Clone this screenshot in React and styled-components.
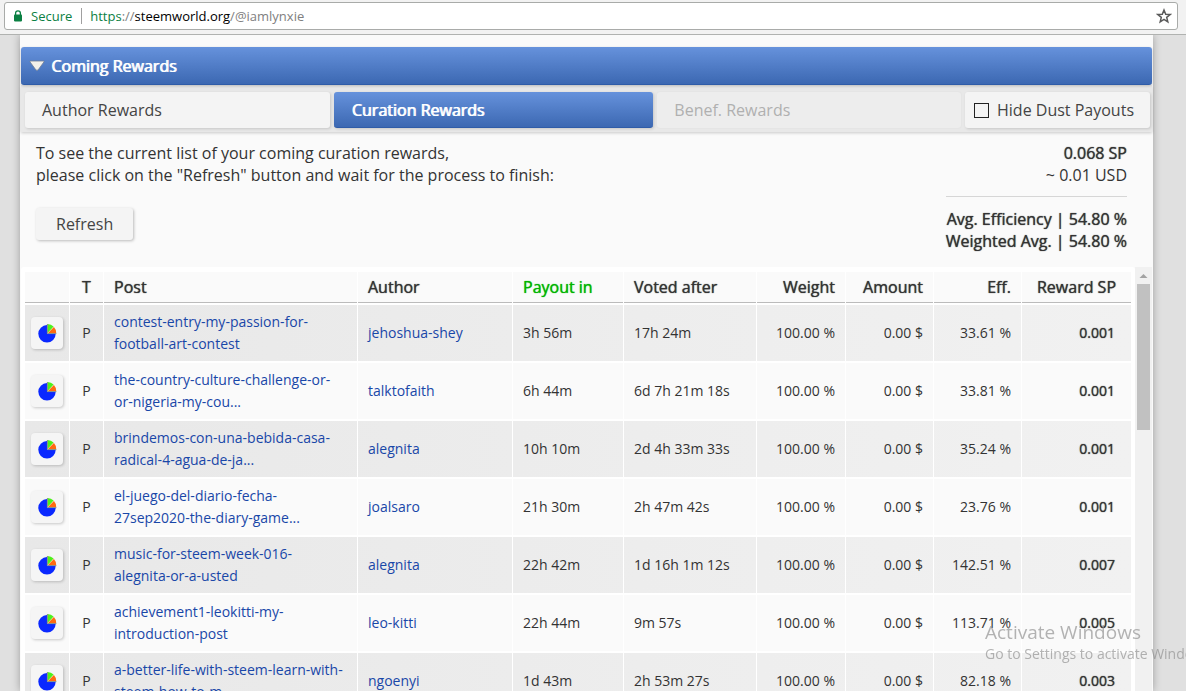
import { useState } from "react";
import styled, { createGlobalStyle, css } from "styled-components";

const GlobalStyle = createGlobalStyle`
  * {
    box-sizing: border-box;
  }
  body {
    margin: 0;
    background: #e0e0e0;
    color: #333;
    font-family: "Open Sans", "Noto Sans", sans-serif;
    font-size: 16px;
    line-height: 22px;
  }
`;

const strong = css`
  text-shadow: 0 0 1px currentColor;
`;

const blue = css`
  background: linear-gradient(#6692dc, #3c68b2);
  border-bottom: 1px solid #2f5ca8;
  color: #fff;
  text-shadow: 1px 0 0 currentColor;
`;

const Screen = styled.div`
  display: flex;
  flex-direction: column;
  height: 100vh;
  overflow: hidden;
`;

const BrowserBar = styled.div`
  flex: none;
  position: relative;
  padding: 2px 8px 4px 4px;
  background: #f2f2f2;
  border-bottom: 1px solid #b0b2b0;
`;

const AddressBox = styled.div`
  display: flex;
  align-items: center;
  height: 28px;
  padding: 0 5px 0 8px;
  background: #fff;
  border: 1px solid #a9aba9;
  border-radius: 3px;
  font-size: 13px;
`;

const Secure = styled.span`
  margin-left: 8px;
  padding-right: 9px;
  border-right: 1px solid #a0a0a0;
  color: #0b8043;
  line-height: 16px;
`;

const Url = styled.a`
  flex: 1;
  margin-left: 8px;
  color: #808080;
  text-decoration: none;
`;

const Scheme = styled.span`
  color: #0b8043;
`;

const Host = styled.span`
  color: #000;
`;

const IconButton = styled.button`
  display: flex;
  padding: 0;
  border: 0;
  background: none;
`;

const Page = styled.main`
  flex: 1;
  min-height: 0;
  display: flex;
  flex-direction: column;
  margin: 0 33px 0 20px;
  padding: 12px 1px 0;
  background: #fafafa;
  box-shadow: 0 0 8px rgba(0, 0, 0, 0.3);
`;

const SectionHeader = styled.button`
  ${blue}
  flex: none;
  position: relative;
  display: flex;
  align-items: center;
  gap: 6px;
  height: 38px;
  padding: 0 8px;
  border-width: 0 0 1px;
  border-radius: 3px;
  box-shadow: 0 1px 3px rgba(0, 0, 0, 0.2);
  font: inherit;
`;

const TabBar = styled.div`
  flex: none;
  display: flex;
  gap: 4px;
  padding: 7px 2px 4px 4px;
  background: #e8e8e8;
  box-shadow: 0 1px 3px rgba(0, 0, 0, 0.2);
`;

const Tab = styled.button`
  flex: ${(p) => p.$grow} 1 0;
  height: 36px;
  padding: 0 17px;
  border: 0;
  border-radius: 3px;
  background: #f4f4f4;
  box-shadow: 1px 1px 3px rgba(0, 0, 0, 0.15);
  color: #444;
  font: inherit;
  text-align: left;
  &:disabled {
    background: #ededed;
    box-shadow: 0 0 2px rgba(0, 0, 0, 0.06);
    color: #b0b0b0;
  }
  ${(p) => p.$active && blue}
`;

const DustLabel = styled.label`
  flex: none;
  display: flex;
  align-items: center;
  gap: 8px;
  height: 36px;
  padding: 0 16px 0 9px;
  border-radius: 3px;
  background: #f4f4f4;
  box-shadow: 1px 1px 3px rgba(0, 0, 0, 0.15);
  color: #444;
`;

const Checkbox = styled.input`
  appearance: none;
  width: 15px;
  height: 15px;
  margin: 0;
  border: 1px solid #222;
  &:checked {
    background: #3c68b2;
  }
`;

const Summary = styled.section`
  flex: none;
  display: flex;
  justify-content: space-between;
  align-items: flex-start;
  padding: 10px 25px 15px 15px;
`;

const Intro = styled.p`
  margin: 0 0 22px;
`;

const RefreshButton = styled.button`
  height: 32px;
  padding: 0 20px;
  border: 0;
  border-radius: 3px;
  background: #f4f4f4;
  box-shadow: 1px 1px 3px rgba(0, 0, 0, 0.25);
  color: #444;
  font: inherit;
`;

const Totals = styled.div`
  text-align: right;
`;

const Total = styled.div`
  ${(p) => p.$strong && strong}
`;

const Rule = styled.hr`
  margin: 10px 0 11px;
  border: 0;
  border-top: 1px solid #d6d6d6;
`;

const TableArea = styled.div`
  flex: 1;
  min-height: 0;
  display: flex;
  overflow: hidden;
`;

const TableScroll = styled.div`
  flex: 1;
  min-width: 0;
  padding: 3px 3px 0;
  background: #fff;
  border-radius: 3px 3px 0 0;
`;

const Table = styled.table`
  width: 100%;
  table-layout: fixed;
  border-collapse: separate;
  border-spacing: 1px 2px;
  font-size: 14px;
`;

const HeadCell = styled.th`
  height: 31px;
  padding: 0 10px;
  background: #fafafa;
  border-bottom: 1px solid #bbb;
  color: ${(p) => (p.$sorted ? "#00b400" : "#333")};
  font-size: 16px;
  font-weight: 400;
  text-align: ${(p) => p.$align || "left"};
  white-space: nowrap;
  ${strong}
`;

const Row = styled.tr`
  background: #fafafa;
  &:nth-child(odd) {
    background: linear-gradient(90deg, #e8e8e8, #f1f1f1);
  }
`;

const Cell = styled.td`
  height: 56px;
  padding: 0 ${(p) => p.$pad ?? 10}px;
  text-align: ${(p) => p.$align || "left"};
  white-space: ${(p) => (p.$wrap ? "normal" : "nowrap")};
  ${(p) => p.$strong && strong}
`;

const Link = styled.a`
  color: #1947a8;
  text-decoration: none;
`;

const ChartButton = styled.button`
  display: flex;
  align-items: center;
  justify-content: center;
  width: 32px;
  height: 32px;
  padding: 0;
  border: 0;
  border-radius: 4px;
  background: #f5f5f5;
  box-shadow: 1px 1px 3px rgba(0, 0, 0, 0.2);
`;

const ScrollTrack = styled.div`
  flex: none;
  display: flex;
  flex-direction: column;
  align-items: center;
  width: 17px;
  background: #f1f1f1;
`;

const ScrollArrow = styled.svg`
  flex: none;
  width: 17px;
  height: 17px;
`;

const ScrollThumb = styled.div`
  width: 13px;
  height: 146px;
  background: #c1c1c1;
`;

const Watermark = styled.div`
  position: fixed;
  left: calc(100% - 201px);
  bottom: 26px;
  color: rgba(140, 140, 140, 0.65);
  font-size: 14px;
  white-space: nowrap;
  pointer-events: none;
`;

const WatermarkTitle = styled.div`
  font-size: 19px;
`;

const LockIcon = () => (
  <svg width="10" height="12" viewBox="0 0 10 12">
    <path d="M2.6 5V3.2a2.4 2.4 0 0 1 4.8 0V5" fill="none" stroke="#0b8043" strokeWidth="1.3" />
    <rect x="1" y="4.6" width="8" height="6.8" rx="0.8" fill="#0b8043" />
  </svg>
);

const StarIcon = () => (
  <svg width="16" height="16" viewBox="0 0 16 16">
    <path
      d="M8 2l1.7 4.2 4.5.3-3.5 2.9 1.1 4.4L8 11.4l-3.8 2.4 1.1-4.4L1.8 6.5l4.5-.3z"
      fill="none"
      stroke="#5a5a5a"
      strokeWidth="1.5"
    />
  </svg>
);

const CollapseIcon = () => (
  <svg width="16" height="12" viewBox="0 0 16 12">
    <path
      d="M1.5 1h13q1 0 .4 1L9.200 9.800Q8 11 6.800 9.800L1.100 2Q.5 1 1.500 1z"
      fill="#f3f0ea"
      stroke="#6f7c94"
      strokeWidth="0.8"
    />
  </svg>
);

const PieIcon = () => (
  <svg width="20" height="20" viewBox="0 0 20 20">
    <circle cx="10" cy="10.800" r="8.700" fill="#0a28ff" />
    <path d="M10 10.800V1h10v9.800z" fill="#f5f5f5" />
    <path d="M10.600 9.900V1.100a8.800 8.800 0 0 1 6 2.500z" fill="#4df01a" />
    <path d="M11 10l5.900-6a8.500 8.500 0 0 1 2.300 6z" fill="#ff6a10" />
    <path d="M10.400 1v9.600h9" fill="none" stroke="#7d8478" strokeWidth="0.9" />
  </svg>
);

const columns = [
  { label: "", width: 44 },
  { label: "T", width: 33, align: "center" },
  { label: "Post", width: 253 },
  { label: "Author", width: 154 },
  { label: "Payout in", width: 110, sorted: true },
  { label: "Voted after", width: 132 },
  { label: "Weight", width: 88, align: "right" },
  { label: "Amount", width: 87, align: "right" },
  { label: "Eff.", width: 87, align: "right" },
  { label: "Reward SP", width: 109, align: "center" },
];

const rewards = [
  { post: "contest-entry-my-passion-for-football-art-contest", author: "jehoshua-shey", payout: "3h 56m", voted: "17h 24m", eff: "33.61", sp: "0.001" },
  { post: "the-country-culture-challenge-or-or-nigeria-my-cou...", author: "talktofaith", payout: "6h 44m", voted: "6d 7h 21m 18s", eff: "33.81", sp: "0.001" },
  { post: "brindemos-con-una-bebida-casa-radical-4-agua-de-ja...", author: "alegnita", payout: "10h 10m", voted: "2d 4h 33m 33s", eff: "35.24", sp: "0.001" },
  { post: "el-juego-del-diario-fecha-27sep2020-the-diary-game...", author: "joalsaro", payout: "21h 30m", voted: "2h 47m 42s", eff: "23.76", sp: "0.001" },
  { post: "music-for-steem-week-016-alegnita-or-a-usted", author: "alegnita", payout: "22h 42m", voted: "1d 16h 1m 12s", eff: "142.51", sp: "0.007" },
  { post: "achievement1-leokitti-my-introduction-post", author: "leo-kitti", payout: "22h 44m", voted: "9m 57s", eff: "113.71", sp: "0.005" },
  { post: "a-better-life-with-steem-learn-with-steem-how-to-m...", author: "ngoenyi", payout: "1d 43m", voted: "2h 53m 27s", eff: "82.18", sp: "0.003" },
];

const RewardRow = ({ reward }) => (
  <Row>
    <Cell $pad={6}>
      <ChartButton aria-label="Show chart">
        <PieIcon />
      </ChartButton>
    </Cell>
    <Cell $align="center">P</Cell>
    <Cell $wrap>
      <Link href="#post">{reward.post}</Link>
    </Cell>
    <Cell>
      <Link href="#author">{reward.author}</Link>
    </Cell>
    <Cell>{reward.payout}</Cell>
    <Cell>{reward.voted}</Cell>
    <Cell $align="right">100.00 %</Cell>
    <Cell $align="right">0.00 $</Cell>
    <Cell $align="right">{reward.eff} %</Cell>
    <Cell $align="right" $pad={16} $strong>
      {reward.sp}
    </Cell>
  </Row>
);

const App = () => {
  const [tab, setTab] = useState("curation");
  const [hideDust, setHideDust] = useState(false);

  return (
    <Screen>
      <GlobalStyle />
      <BrowserBar>
        <AddressBox>
          <LockIcon />
          <Secure>Secure</Secure>
          <Url href="#top">
            <Scheme>https</Scheme>://<Host>steemworld.org</Host>/@iamlynxie
          </Url>
          <IconButton aria-label="Bookmark">
            <StarIcon />
          </IconButton>
        </AddressBox>
      </BrowserBar>
      <Page>
        <SectionHeader>
          <CollapseIcon />
          Coming Rewards
        </SectionHeader>
        <TabBar>
          <Tab $grow={304} $active={tab === "author"} onClick={() => setTab("author")}>
            Author Rewards
          </Tab>
          <Tab $grow={319} $active={tab === "curation"} onClick={() => setTab("curation")}>
            Curation Rewards
          </Tab>
          <Tab $grow={302} disabled>
            Benef. Rewards
          </Tab>
          <DustLabel>
            <Checkbox
              type="checkbox"
              checked={hideDust}
              onChange={(e) => setHideDust(e.target.checked)}
            />
            Hide Dust Payouts
          </DustLabel>
        </TabBar>
        <Summary>
          <div>
            <Intro>
              To see the current list of your coming curation rewards,
              <br />
              please click on the "Refresh" button and wait for the process to finish:
            </Intro>
            <RefreshButton>Refresh</RefreshButton>
          </div>
          <Totals>
            <Total $strong>0.068 SP</Total>
            <Total>~ 0.01 USD</Total>
            <Rule />
            <Total $strong>Avg. Efficiency | 54.80 %</Total>
            <Total $strong>Weighted Avg. | 54.80 %</Total>
          </Totals>
        </Summary>
        <TableArea>
          <TableScroll>
            <Table>
              <colgroup>
                {columns.map((c, i) => (
                  <col key={i} width={c.width} />
                ))}
              </colgroup>
              <thead>
                <tr>
                  {columns.map((c, i) => (
                    <HeadCell key={i} $align={c.align} $sorted={c.sorted}>
                      {c.label}
                    </HeadCell>
                  ))}
                </tr>
              </thead>
              <tbody>
                {rewards.map((r) => (
                  <RewardRow key={r.post} reward={r} />
                ))}
              </tbody>
            </Table>
          </TableScroll>
          <ScrollTrack>
            <ScrollArrow viewBox="0 0 17 17">
              <path d="M4.500 11h8L8.500 7z" fill="#a3a3a3" />
            </ScrollArrow>
            <ScrollThumb />
          </ScrollTrack>
        </TableArea>
      </Page>
      <Watermark>
        <WatermarkTitle>Activate Windows</WatermarkTitle>
        Go to Settings to activate Windows.
      </Watermark>
    </Screen>
  );
};

export default App;
